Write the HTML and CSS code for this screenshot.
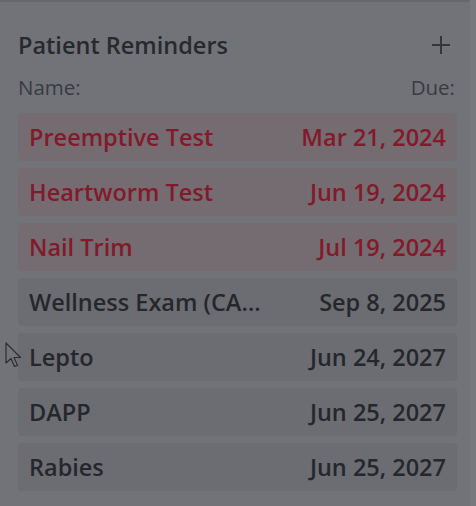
FILE: index.html
```html
<!DOCTYPE html>
<html>
<head>
<meta charset="utf-8">
<link rel="stylesheet" href="styles.css">
</head>
<body>
<div class="panel">
  <div class="header">
    <h2 class="title">Patient Reminders</h2>
    <svg class="plus" width="18" height="18" viewBox="0 0 18 18"><path d="M9 0V18M0 9H18" stroke="#34363c" stroke-width="2"/></svg>
  </div>
  <div class="cols"><span>Name:</span><span>Due:</span></div>
  <ul class="list">
    <li class="row overdue"><span class="name">Preemptive Test</span><span class="due">Mar 21, 2024</span></li>
    <li class="row overdue"><span class="name">Heartworm Test</span><span class="due">Jun 19, 2024</span></li>
    <li class="row overdue"><span class="name">Nail Trim</span><span class="due">Jul 19, 2024</span></li>
    <li class="row"><span class="name">Wellness Exam (CANINE)</span><span class="due">Sep 8, 2025</span></li>
    <li class="row"><span class="name">Lepto</span><span class="due">Jun 24, 2027</span></li>
    <li class="row"><span class="name">DAPP</span><span class="due">Jun 25, 2027</span></li>
    <li class="row"><span class="name">Rabies</span><span class="due">Jun 25, 2027</span></li>
  </ul>
</div>
<svg class="cursor" width="20" height="28" viewBox="0 0 20 28"><path d="M1 1 L1 21 L6 16.5 L9.5 24.5 L12.5 23.2 L9 15.5 L15.5 15.5 Z" fill="#727479" stroke="#2c2d31" stroke-width="1.2" stroke-linejoin="round"/></svg>
</body>
</html>
```
FILE: styles.css
```css
html, body {
  margin: 0;
  padding: 0;
  background: #77797f;
  height: 100%;
}
body {
  font-family: "Open Sans", "Noto Sans", sans-serif;
  position: relative;
  overflow: hidden;
}
.panel {
  width: 470px;
  height: 506px;
  box-sizing: border-box;
  border-top: 2px solid #66686e;
  background: #717379;
  padding: 27px 13px 0 18px;
}
.header {
  display: flex;
  justify-content: space-between;
  align-items: center;
  padding-right: 7px;
}
.title {
  margin: 0;
  font-size: 23.5px;
  font-weight: 600;
  color: #28292e;
  line-height: 32px;
}
.cols {
  display: flex;
  justify-content: space-between;
  margin-top: 13px;
  font-size: 20.5px;
  color: #393b41;
  line-height: 26px;
  padding-right: 2px;
}
.list {
  list-style: none;
  margin: 13px 0 0;
  padding: 0;
  display: flex;
  flex-direction: column;
  gap: 7px;
}
.row {
  display: flex;
  justify-content: space-between;
  align-items: center;
  height: 48px;
  padding: 0 11px;
  border-radius: 4px;
  background: #6b6d73;
  font-size: 23.5px;
  font-weight: 600;
  color: #26272b;
}
.row.overdue {
  background: #746c70;
  color: #821a2c;
}
.name {
  white-space: nowrap;
  overflow: hidden;
  text-overflow: ellipsis;
  max-width: 240px;
}
.due {
  white-space: nowrap;
}
.cursor {
  position: absolute;
  left: 5px;
  top: 342px;
}
```
